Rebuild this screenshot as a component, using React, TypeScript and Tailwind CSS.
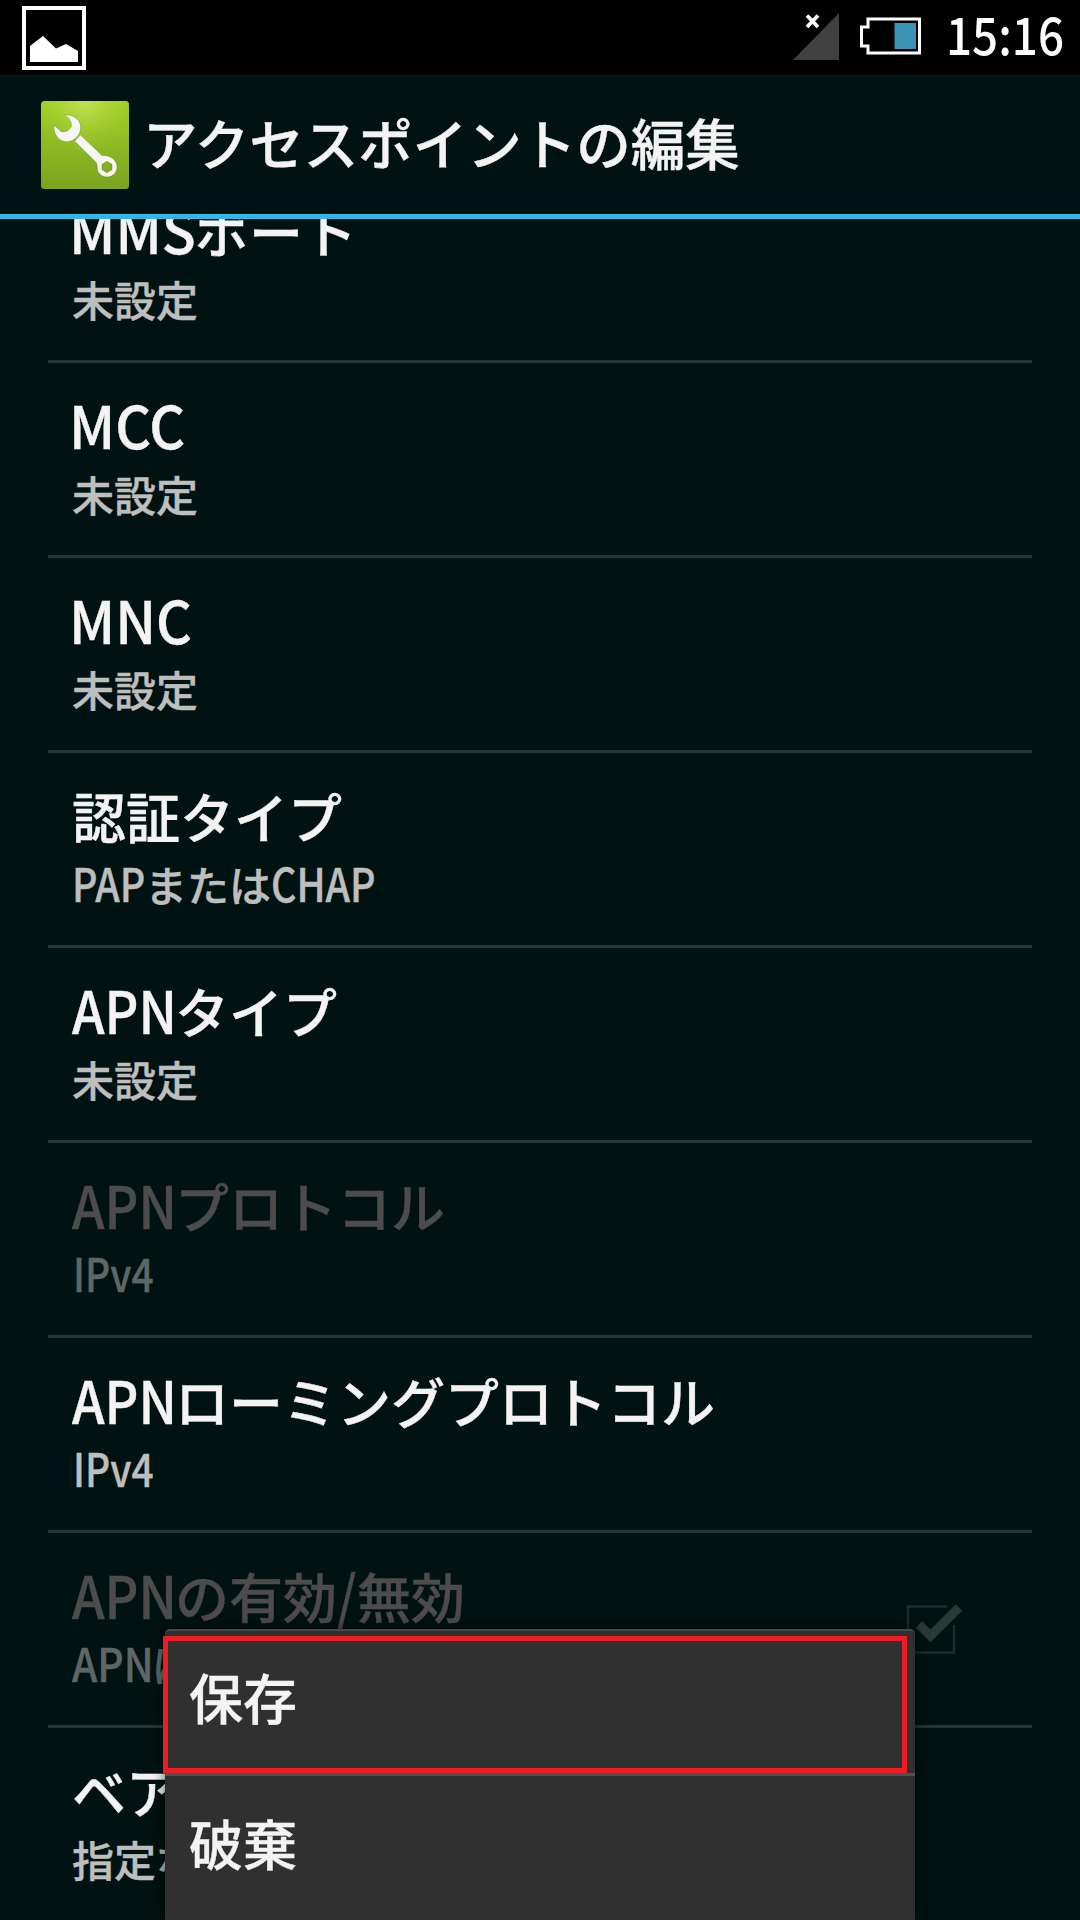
import { clsx } from "clsx";

// Latin runs are a little taller and narrower than the kana beside them.
type Run = string | { text: string; width: number; scale: number; nudge?: number };

type Row = {
  id: string;
  title: Run[];
  summary: Run[];
  disabled?: boolean;
  checked?: boolean;
};

const unset: Run[] = ["未設定"];
const apn: Run = { text: "APN", width: 103, scale: 0.89 };
const ipv4: Run = { text: "IPv4", width: 80, scale: 0.85, nudge: 1 };

const rows: Row[] = [
  { id: "mms-port", title: [{ text: "MMS", width: 123, scale: 0.95, nudge: -3 }, "ポート"], summary: unset },
  { id: "mcc", title: [{ text: "MCC", width: 112, scale: 0.945, nudge: -3 }], summary: unset },
  { id: "mnc", title: [{ text: "MNC", width: 118, scale: 0.945, nudge: -3 }], summary: unset },
  {
    id: "auth",
    title: ["認証タイプ"],
    summary: [{ text: "PAP", width: 73, scale: 0.86 }, "または", { text: "CHAP", width: 104, scale: 0.86 }],
  },
  { id: "apn-type", title: [apn, "タイプ"], summary: unset },
  { id: "apn-protocol", title: [apn, "プロトコル"], summary: [ipv4], disabled: true },
  { id: "roaming", title: [apn, "ローミングプロトコル"], summary: [ipv4] },
  {
    id: "enabled",
    title: [apn, "の有効", { text: "/", width: 20, scale: 0.85 }, "無効"],
    summary: [{ text: "APN", width: 80, scale: 0.89 }, "は有効です"],
    disabled: true,
    checked: true,
  },
  { id: "bearer", title: ["ベアラー"], summary: ["指定なし"] },
];

function Runs({ runs }: { runs: Run[] }) {
  return runs.map((run, index) =>
    typeof run === "string" ? (
      <span key={index}>{run}</span>
    ) : (
      <span key={index} className="inline-block text-[1.09em] leading-[0.8]" style={{ width: run.width }}>
        <span
          className="inline-block origin-left"
          style={{ transform: `translateX(${run.nudge ?? 0}px) scaleX(${run.scale})` }}
        >
          {run.text}
        </span>
      </span>
    ),
  );
}

function StatusBar() {
  return (
    <div className="flex h-[75px] shrink-0 items-start bg-black text-white">
      <svg className="mt-[5px] ml-[21px]" width="66" height="66" viewBox="0 0 66 66">
        <rect x="3" y="3" width="60" height="60" fill="none" stroke="#fff" strokeWidth="4" />
        <path d="M9 41 L22 31 L35 43.5 L45 39 L57 46 V57 H9 Z" fill="#fff" />
      </svg>
      <svg className="mt-[12px] ml-auto" width="48" height="50" viewBox="0 0 48 50">
        <path d="M0 48 L46 1 V48 Z" fill="#404040" />
        <path d="M14 3.500 L25 15 M25 3.500 L14 15" stroke="#fff" strokeWidth="3.800" />
      </svg>
      <svg className="mt-[16px] ml-[18px]" width="64" height="40" viewBox="0 0 64 40">
        <path d="M9 3 H60.5 V37 H9 V30 H2.5 V11 H9 Z" fill="none" stroke="#fff" strokeWidth="3" />
        <rect x="35.500" y="7" width="21.500" height="26" fill="#3993b5" />
      </svg>
      <div className="mr-[16px] ml-[23px] h-[75px] w-[118px] text-[52px] leading-[66px] [-webkit-text-stroke:0]">
        <span className="inline-block origin-left scale-x-[0.88] font-medium">15:16</span>
      </div>
    </div>
  );
}

function SettingsIcon() {
  return (
    <svg width="88" height="88" viewBox="0 0 88 88">
      <defs>
        <linearGradient id="tile" x1="0" y1="0" x2="0" y2="1">
          <stop offset="0" stopColor="#a3cf26" />
          <stop offset="1" stopColor="#78a41f" />
        </linearGradient>
        <radialGradient id="glow" cx="0.5" cy="0" r="0.6">
          <stop offset="0" stopColor="#d0e868" stopOpacity="0.75" />
          <stop offset="1" stopColor="#a3cf26" stopOpacity="0" />
        </radialGradient>
      </defs>
      <rect width="88" height="88" rx="3.500" fill="url(#tile)" />
      <rect width="88" height="88" rx="3.500" fill="url(#glow)" />
      <g fill="#f6f6f6" stroke="#55751a" strokeOpacity="0.45" strokeWidth="0.8">
        <path d="M23.500 14 C32 13 39.500 18.500 39.700 26 C39.800 34.500 33 41 25 40.700 C17 40 12.500 32.500 12.700 24.500 L16.500 27 L20.500 31 L26.500 30 L30.500 25.500 L30 21 L28 17.500 Z" />
        <path
          fillRule="evenodd"
          d="M39.300 33.800 L61 54.500 C69 53.500 76 59 76 66 C76 71.800 71.500 76 66 76 C60 76 56 71.500 56.200 66 C56.200 64 56 62.500 54.800 61 L33.700 40.200 Z M66 60.300 L61 63.200 V68.800 L66 71.700 L71 68.800 V63.200 Z"
        />
      </g>
    </svg>
  );
}

function CheckBox() {
  return (
    <svg width="60" height="54" viewBox="0 0 60 54">
      <path d="M42 3.500 H3 V49.500 H49 V22" fill="none" stroke="#1b2d2c" strokeWidth="2.400" />
      <path d="M14 21.500 L25.500 33 L54 4.500" fill="none" stroke="#293938" strokeWidth="9" />
    </svg>
  );
}

function PreferenceRow({ row }: { row: Row }) {
  return (
    <div className="flex h-[195px] shrink-0 border-b-[3px] border-[#273535] pr-[67px] pl-[24px]">
      <div className="flex-1 whitespace-nowrap pt-[33px]">
        <div className={clsx("h-[60px] text-[54px] leading-[60px]", row.disabled ? "text-[#4c4c4c]" : "text-[#f3f3f3]")}>
          <Runs runs={row.title} />
        </div>
        <div
          className={clsx("mt-[8px] h-[60px] text-[42px] leading-[60px]", row.disabled ? "text-[#5c6766]" : "text-[#bebebe]")}
        >
          <Runs runs={row.summary} />
        </div>
      </div>
      {row.checked && (
        <div className="pt-[70px]">
          <CheckBox />
        </div>
      )}
    </div>
  );
}

function OptionsMenu() {
  return (
    <div className="absolute bottom-0 left-[165px] h-[291px] w-[750px] rounded-t-[5px] border-t-2 border-[#484848] bg-[#303030] text-[54px] text-[#f3f3f3] shadow-[0_0_14px_rgba(0,0,0,0.6)]">
      <div className="flex h-[142px] items-center pb-[10px] pl-[24px] leading-[60px]">保存</div>
      <div className="flex h-[147px] items-center border-t-[3px] border-[#505050] pb-[10px] pl-[24px] leading-[60px]">破棄</div>
      <div className="absolute top-[5px] -left-[2px] h-[137px] w-[744px] border-[5px] border-[#ed1c24]" />
    </div>
  );
}

export default function App() {
  return (
    <div className="relative flex h-[1920px] w-[1080px] flex-col overflow-hidden bg-[#001211] font-['Noto_Sans_CJK_JP',sans-serif] font-medium [-webkit-text-stroke:0.4px]">
      <StatusBar />
      <header className="flex h-[144px] shrink-0 items-start border-t border-b-[5px] border-t-[#0e1c1c] border-b-[#33b5e5] pl-[41px]">
        <div className="mt-[25px]">
          <SettingsIcon />
        </div>
        <h1 className="mt-[36px] ml-[14px] text-[54.5px] leading-[60px] font-medium text-[#f3f3f3]">アクセスポイントの編集</h1>
      </header>
      <main className="flex min-h-0 flex-1 flex-col overflow-hidden px-[48px]">
        <div className="-mt-[51px] flex flex-col">
          {rows.map((row) => (
            <PreferenceRow key={row.id} row={row} />
          ))}
        </div>
      </main>
      <OptionsMenu />
    </div>
  );
}
